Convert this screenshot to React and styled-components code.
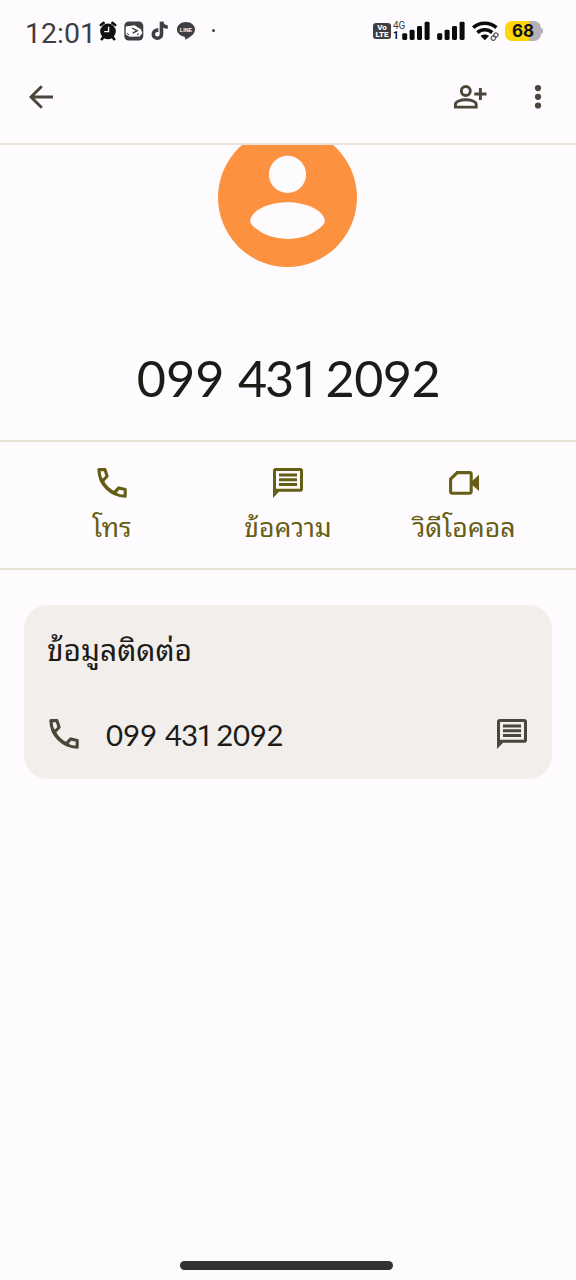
import React from 'react'
import styled, { createGlobalStyle } from 'styled-components'

const GlobalStyle = createGlobalStyle`
  * {
    box-sizing: border-box;
  }
  body {
    margin: 0;
    background: #fefbff;
  }
`

const PhoneIcon = ({ size = 40 }) => (
  <svg width={size} height={size} viewBox="0 0 40 40" fill="none" stroke="currentColor" strokeWidth="3.1" strokeLinejoin="round">
    <path d="M6.9 6.6H13L15.1 13.2L10.4 18.2C13 23.2 17 27.2 22.2 29.9L26.8 24.9L33.2 26.6V33.2C18.5 32.6 7.4 21.4 6.9 6.6Z" />
    <path d="M10.4 18.2L8.6 15M22.2 29.9L25.2 31.4" />
  </svg>
)

const MessageIcon = ({ size = 40 }) => (
  <svg width={size} height={size} viewBox="0 0 40 40" fill="currentColor">
    <path fillRule="evenodd" d="M7.6 5H32.4C33.8 5 35 6.2 35 7.6V26.2C35 27.6 33.8 28.8 32.4 28.8H11L5 35V7.6C5 6.2 6.2 5 7.6 5ZM8 8V25.8H32V8Z" />
    <path d="M11 10.6H29V13.5H11ZM11 15.3H29V18.2H11ZM11 20H29V22.9H11Z" />
  </svg>
)

const VideoIcon = () => (
  <svg width="40" height="40" viewBox="0 0 40 40">
    <path d="M13.2 9.6H25.6Q27.2 9.6 27.2 11.2V28.6Q27.2 30.2 25.6 30.2H8.2Q6.6 30.2 6.6 28.6V16.2Z" fill="none" stroke="currentColor" strokeWidth="3.1" />
    <path d="M26 19.9L35 11.8V28Z" fill="currentColor" />
  </svg>
)

const BackIcon = () => (
  <svg width="28" height="28" viewBox="0 0 28 28" fill="none" stroke="currentColor" strokeWidth="2.9">
    <path d="M14.8 3.2L4 14L14.8 24.8M3.5 14H26" />
  </svg>
)

const AddPersonIcon = () => (
  <svg width="36" height="28" viewBox="0 0 36 28" fill="none" stroke="currentColor" strokeWidth="2.9">
    <circle cx="13.8" cy="8" r="4.5" />
    <path d="M3.4 24.1V21.2C3.4 18.6 8.6 16.8 13.8 16.8S24.2 18.6 24.2 21.2V24.1Z" />
    <path d="M28.4 4.9V17.1M22.3 11H34.5" />
  </svg>
)

const MoreIcon = () => (
  <svg width="8" height="28" viewBox="0 0 8 28" fill="currentColor">
    <circle cx="4" cy="5.1" r="3.1" />
    <circle cx="4" cy="13.8" r="3.1" />
    <circle cx="4" cy="22.5" r="3.1" />
  </svg>
)

const AlarmIcon = () => (
  <svg width="18" height="20" viewBox="0 0 18 20">
    <g stroke="#111" strokeWidth="2.6" strokeLinecap="round">
      <path d="M1.8 4L4.6 1.9M16.2 4L13.4 1.9M4 16.5L2.8 18.2M14 16.5L15.2 18.2" />
    </g>
    <circle cx="9" cy="10.4" r="7.8" fill="#111" />
    <path d="M9.6 5.8V10.6H5.2" fill="none" stroke="#fff" strokeWidth="1.3" />
  </svg>
)

const ClipIcon = () => (
  <svg width="20" height="20" viewBox="0 0 20 20">
    <rect x="0.3" y="0.5" width="19" height="19" rx="4.5" fill="#3f3f43" />
    <path d="M1.8 5.4L10.5 4.2L16.8 8.2L18.4 12L15.6 15.6L5.6 15.8L1.6 13.4Z" fill="#fff" />
    <path d="M8 7L13.2 9.8L8.8 12" fill="none" stroke="#3f3f43" strokeWidth="1.4" />
    <path d="M2.6 12.2L5 13.8M13 14L15 12.6" stroke="#3f3f43" />
  </svg>
)

const TikTokIcon = () => (
  <svg width="18" height="20" viewBox="0 0 18 20" fill="none" stroke="#3f3f43" strokeWidth="3.6">
    <path d="M10.5 0.8V13.2A4.1 4.1 0 1 1 6.4 9.1H7.4" />
    <path d="M10.5 0.8C11 4 13.2 6 16.8 6.2" />
  </svg>
)

const LineIcon = () => (
  <svg width="20" height="20" viewBox="0 0 20 20">
    <path d="M10 1C4.8 1 1 4.3 1 8.5C1 12 4 14.8 8.3 15.7C9.6 16 9.2 17.4 9.2 18.8C13 17 19 13.4 19 8.5C19 4.3 15.2 1 10 1Z" fill="#3f3f43" />
    <text x="10" y="10.6" textAnchor="middle" fill="#fff" fontFamily="Liberation Sans, sans-serif" fontWeight="700" fontSize="5.4">LINE</text>
  </svg>
)

const SignalIcon = () => (
  <svg width="28" height="20" viewBox="0 0 28 20" fill="#0b0b0b">
    <rect x="0.2" y="12.2" width="5" height="6.8" rx="1.4" />
    <rect x="7.6" y="8.8" width="5" height="10.2" rx="1.4" />
    <rect x="15" y="5" width="5" height="14" rx="1.4" />
    <rect x="22.6" y="0.8" width="5" height="18.2" rx="1.4" />
  </svg>
)

const WifiIcon = () => (
  <svg width="28" height="20" viewBox="0 0 28 20" fill="none">
    <g stroke="#0b0b0b" strokeWidth="3.5">
      <path d="M1.2 6.6C7.6 0.8 18 0.8 24.4 6.6" />
      <path d="M5.4 11.6C9.8 7.8 15.8 7.8 20.2 11.6" />
    </g>
    <path d="M8.6 15C11 13 14.6 13 17 15L12.8 19.2Z" fill="#0b0b0b" />
    <g stroke="#fefbff" strokeWidth="4">
      <path d="M20.6 17L24.4 13.2" />
    </g>
    <g stroke="#555" strokeWidth="1.2" transform="rotate(-50 22.6 15.6)">
      <rect x="18.4" y="13.6" width="4.6" height="4" rx="2" />
      <rect x="22.2" y="13.6" width="4.6" height="4" rx="2" />
    </g>
  </svg>
)

const AvatarIcon = () => (
  <svg width="140" height="140" viewBox="0 0 140 140">
    <circle cx="69.5" cy="69.5" r="69.5" fill="#fc9140" />
    <circle cx="69.5" cy="46.4" r="18.6" fill="#fefbff" />
    <path d="M32.2 92.6C33.5 82.1 51 74.3 69.5 74.3S105.5 82.1 106.8 92.6C107 94.6 106 95.8 104.5 97.4C96 106.1 83.5 110.9 69.5 110.9S43 106.1 34.5 97.4C33 95.8 32 94.6 32.2 92.6Z" fill="#fefbff" />
  </svg>
)

const actions = [
  { label: 'โทร', icon: <PhoneIcon /> },
  { label: 'ข้อความ', icon: <MessageIcon /> },
  { label: 'วิดีโอคอล', icon: <VideoIcon /> },
]

function PhoneNumber({ large }) {
  return (
    <Number $large={large}>
      <Digits>099</Digits>{' '}
      <Digits $before="0.27em" $tracking="-0.04em">43<One>1</One></Digits>{' '}
      <Digits $before="0.1em" $tracking="-0.01em">2092</Digits>
    </Number>
  )
}

function App() {
  return (
    <Screen>
      <GlobalStyle />
      <StatusBar>
        <Clock>12:01</Clock>
        <Notifications>
          <AlarmIcon />
          <ClipIcon />
          <TikTokIcon />
          <LineIcon />
          <Dot />
        </Notifications>
        <SystemIcons>
          <Volte>
            <span>Vo</span>
            <span>LTE</span>
          </Volte>
          <Network>
            <span>4G</span>
            <b>1</b>
          </Network>
          <SignalIcon />
          <SecondSignal>
            <SignalIcon />
          </SecondSignal>
          <WifiIcon />
          <Battery>68</Battery>
          <BatteryTip />
        </SystemIcons>
      </StatusBar>
      <AppBar>
        <BackIcon />
        <BarActions>
          <AddPersonIcon />
          <MoreIcon />
        </BarActions>
      </AppBar>
      <Hero>
        <AvatarIcon />
        <PhoneNumber large />
      </Hero>
      <Actions>
        {actions.map((action) => (
          <Action key={action.label}>
            {action.icon}
            <span>{action.label}</span>
          </Action>
        ))}
      </Actions>
      <Card>
        <CardTitle>ข้อมูลติดต่อ</CardTitle>
        <ContactRow>
          <PhoneIcon />
          <PhoneNumber />
          <MessageIcon />
        </ContactRow>
      </Card>
      <HomeBar />
    </Screen>
  )
}

const Screen = styled.div`
  display: flex;
  flex-direction: column;
  width: 576px;
  height: 1280px;
  overflow: hidden;
  background: #fefbff;
  color: #1c1b17;
  font-family: Roboto, 'Noto Sans Thai Looped', sans-serif;

  svg {
    display: block;
    flex-shrink: 0;
  }
`

const StatusBar = styled.header`
  display: flex;
  align-items: center;
  height: 61px;
  padding: 0 33px 0 25px;
`

const Clock = styled.div`
  width: 74px;
  padding-top: 6px;
  font-size: 28.5px;
  line-height: 32px;
  color: #3f3f43;
`

const Notifications = styled.div`
  display: flex;
  align-items: center;
  gap: 7px;
`

const Dot = styled.i`
  width: 3px;
  height: 3px;
  margin-left: 9px;
  border-radius: 50%;
  background: #3f3f43;
`

const SystemIcons = styled.div`
  display: flex;
  align-items: center;
  margin-left: auto;
`

const Volte = styled.div`
  display: flex;
  flex-direction: column;
  align-items: center;
  justify-content: center;
  width: 18px;
  height: 16px;
  border-radius: 3px;
  background: #3f3f43;
  color: #fff;
  font-size: 8px;
  font-weight: 800;
  line-height: 7px;
`

const Network = styled.div`
  display: flex;
  flex-direction: column;
  width: 9px;
  height: 20px;
  margin-left: 2px;
  font-size: 10px;
  line-height: 10px;
  color: #3f3f43;

  b {
    color: #0b0b0b;
  }
`

const SecondSignal = styled.div`
  margin: 0 7px 0 7px;
`

const Battery = styled.div`
  width: 36px;
  height: 20px;
  margin-left: 5px;
  border-radius: 7px;
  background: linear-gradient(90deg, #fdd60c 68%, #b4b2b6 68%);
  color: #111;
  font-family: Inter, sans-serif;
  font-size: 17px;
  font-weight: 700;
  line-height: 20px;
  text-align: center;
`

const BatteryTip = styled.i`
  width: 2px;
  height: 6px;
  border-radius: 0 2px 2px 0;
  background: #b4b2b6;
`

const AppBar = styled.nav`
  display: flex;
  align-items: center;
  justify-content: space-between;
  height: 84px;
  padding: 0 34px 11px 27px;
  border-bottom: 2px solid #e8e4d9;
  color: #49473a;
`

const BarActions = styled.div`
  display: flex;
  gap: 46px;
`

const Hero = styled.section`
  display: flex;
  flex-direction: column;
  align-items: center;
  height: 297px;
  overflow: hidden;
  border-bottom: 2px solid #e5e3d1;

  > svg {
    margin-top: -17.5px;
  }
`

const Number = styled.div`
  display: flex;
  font-family: Lato, sans-serif;
  white-space: nowrap;
  margin-top: ${({ $large }) => ($large ? '80.5px' : '3px')};
  padding-left: ${({ $large }) => ($large ? '1px' : '0')};
  font-size: ${({ $large }) => ($large ? '50.3px' : '29.4px')};
  line-height: ${({ $large }) => ($large ? '60px' : '36px')};
`

const Digits = styled.span`
  margin-left: ${({ $before }) => $before || 0};
  letter-spacing: ${({ $tracking }) => $tracking || 'normal'};
`

// Roboto's figure one has no foot
const One = styled.span`
  font-family: Roboto, sans-serif;
  letter-spacing: 0;
`

const Actions = styled.section`
  display: grid;
  grid-template-columns: repeat(3, 176px);
  justify-content: center;
  height: 128px;
  border-bottom: 2px solid #e5e3d1;
  color: #665e14;
`

const Action = styled.button`
  display: flex;
  flex-direction: column;
  align-items: center;
  padding: 21px 0 0;
  border: 0;
  background: none;
  color: inherit;
  font-family: inherit;
  font-size: 26.6px;
  line-height: 50px;
`

const Card = styled.section`
  height: 174px;
  margin: 35px 24px 0 23.5px;
  padding: 22px 20px 0 23.5px;
  border-radius: 24px;
  background: #f1eeeb;
`

const CardTitle = styled.h2`
  margin: 0;
  font-size: 29.9px;
  font-weight: 400;
  line-height: 48px;
`

const ContactRow = styled.div`
  display: flex;
  align-items: center;
  height: 40px;
  margin: 39px 0 0 -3px;
  color: #49473a;

  > div {
    flex: 1;
    margin-left: 22px;
    color: #1c1b17;
  }
`

const HomeBar = styled.div`
  width: 213px;
  height: 9px;
  margin: auto auto 10px 180px;
  border-radius: 5px;
  background: #323234;
`

export default App
